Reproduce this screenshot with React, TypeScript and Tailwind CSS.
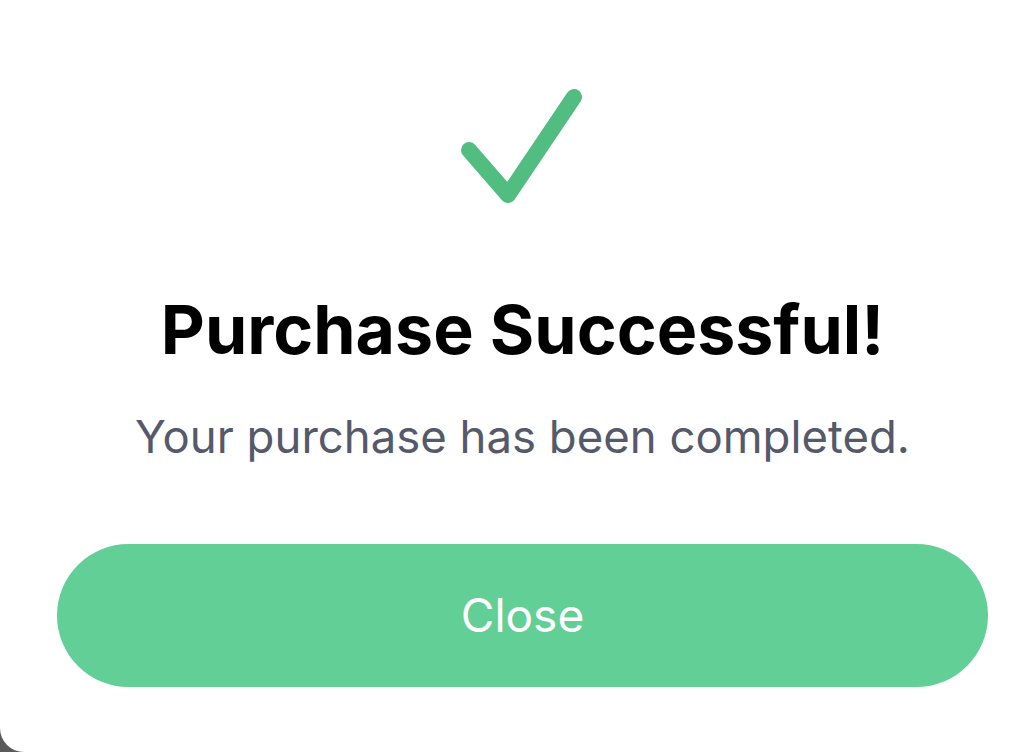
export default function App() {
  return (
    <div className="min-h-screen bg-[#5a5a5a]">
      <div
        className="flex h-[752px] w-full flex-col items-center rounded-bl-[24px] bg-white pl-[57px] pr-[36px] pt-[80px]"
        style={{ fontFamily: "Inter, 'Noto Sans', sans-serif" }}
      >
        <svg width="160" height="140" viewBox="0 0 160 140" fill="none">
          <path
            d="M26 70 L65 115 L131 17"
            stroke="#52bd80"
            strokeWidth="16"
            strokeLinecap="round"
            strokeLinejoin="round"
          />
        </svg>
        <h1 className="mt-[75px] text-[68px] font-bold leading-none text-black">
          Purchase Successful!
        </h1>
        <p className="mt-[51px] text-[45.5px] leading-none text-[#545a6a]">
          Your purchase has been completed.
        </p>
        <button className="mt-[84px] flex h-[143px] w-full items-center justify-center rounded-full bg-[#62d096] text-[46px] text-white">
          Close
        </button>
      </div>
    </div>
  );
}
